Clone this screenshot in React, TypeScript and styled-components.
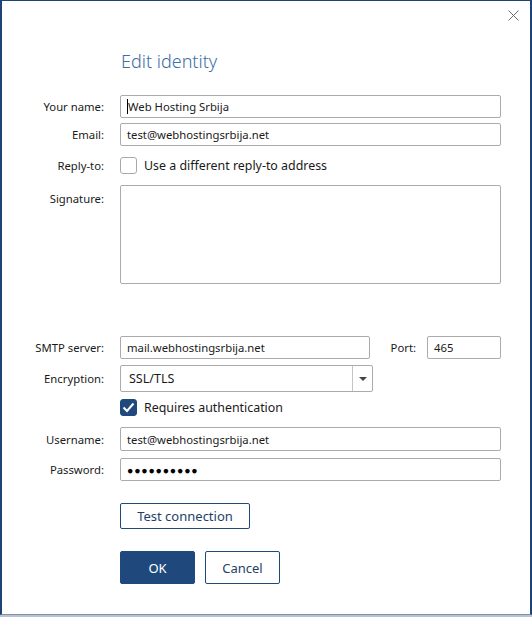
import React from "react";
import styled, { createGlobalStyle } from "styled-components";

const GlobalStyle = createGlobalStyle`
  html, body {
    margin: 0;
    padding: 0;
    background: #b9c3d1;
  }
  body {
    font-family: "Noto Sans", "Open Sans", sans-serif;
    color: #1a1a1a;
  }
`;

const Dialog = styled.div`
  width: 532px;
  height: 615px;
  box-sizing: border-box;
  background: #fff;
  border: 2px solid #1d4477;
  border-top-width: 1px;
  border-bottom: 1px solid #7f90aa;
  display: flex;
  flex-direction: column;
`;

const TopBar = styled.div`
  height: 29px;
  display: flex;
  justify-content: flex-end;
  align-items: center;
  padding-right: 11px;
`;

const CloseButton = styled.button`
  width: 12px;
  height: 12px;
  padding: 0;
  border: none;
  background: none;
  display: flex;
  align-items: center;
  justify-content: center;
  cursor: pointer;
  color: #6b6b6b;
`;

const Title = styled.h1`
  margin: 17px 0 0 119px;
  font-size: 18px;
  line-height: 28px;
  font-weight: 300;
  color: #3d6ea6;
`;

const Form = styled.div`
  display: flex;
  flex-direction: column;
  padding-right: 29px;
`;

const Row = styled.div<{ $mt: number; $top?: boolean }>`
  display: grid;
  grid-template-columns: 102px 1fr;
  column-gap: 16px;
  align-items: ${(p) => (p.$top ? "start" : "center")};
  margin-top: ${(p) => p.$mt}px;
`;

const Label = styled.label<{ $pt?: number }>`
  text-align: right;
  font-size: 11.3px;
  color: #1a1a1a;
  padding-top: ${(p) => p.$pt ?? 0}px;
`;

const Field = styled.div<{ $h?: number }>`
  height: ${(p) => p.$h ?? 23}px;
  box-sizing: border-box;
  border: 1px solid #ababab;
  border-radius: 2px;
  padding: 0 6px;
  display: flex;
  align-items: center;
  font-size: 11.3px;
  color: #1a1a1a;
  background: #fff;
  min-width: 0;
`;

const Caret = styled.span`
  display: inline-block;
  width: 1px;
  height: 15px;
  background: #000;
`;

const Dots = styled.span`
  font-size: 10.5px;
  letter-spacing: 0.8px;
  color: #000;
`;

const Inline = styled.div`
  display: flex;
  align-items: center;
`;

const PortLabel = styled.span`
  font-size: 11.3px;
  margin: 0 11px 0 21px;
`;

const Select = styled.div`
  width: 253px;
  height: 27px;
  box-sizing: border-box;
  border: 1px solid #ababab;
  border-radius: 2px;
  display: flex;
  align-items: stretch;
  font-size: 12.5px;
`;

const SelectValue = styled.div`
  flex: 1;
  display: flex;
  align-items: center;
  padding-left: 8px;
`;

const SelectArrow = styled.div`
  width: 19px;
  border-left: 1px solid #c4c4c4;
  display: flex;
  align-items: center;
  justify-content: center;
  &::after {
    content: "";
    border-left: 4px solid transparent;
    border-right: 4px solid transparent;
    border-top: 4px solid #444;
  }
`;

const CheckRow = styled.div`
  display: flex;
  align-items: center;
  gap: 7px;
  height: 18px;
  font-size: 12.4px;
  color: #1a1a1a;
`;

const Box = styled.span<{ $checked?: boolean }>`
  width: 17px;
  height: 17px;
  box-sizing: border-box;
  border-radius: 3px;
  border: 1px solid ${(p) => (p.$checked ? "#1f497d" : "#a9a9a9")};
  background: ${(p) => (p.$checked ? "#1f497d" : "#fff")};
  display: flex;
  align-items: center;
  justify-content: center;
  flex-shrink: 0;
`;

const Button = styled.button<{ $primary?: boolean; $w: number; $h: number }>`
  width: ${(p) => p.$w}px;
  height: ${(p) => p.$h}px;
  box-sizing: border-box;
  border: 1px solid #1f497d;
  border-radius: 2px;
  background: ${(p) => (p.$primary ? "#1f497d" : "#fff")};
  color: ${(p) => (p.$primary ? "#fff" : "#1f3f66")};
  font-family: inherit;
  font-size: 13px;
  padding: 0;
  cursor: pointer;
`;

const Buttons = styled.div`
  display: flex;
  gap: 10px;
`;

const Spacer = styled.span``;

export default function App() {
  return (
    <>
      <GlobalStyle />
      <Dialog>
        <TopBar>
          <CloseButton aria-label="Close">
            <svg width="11" height="11" viewBox="0 0 11 11">
              <path d="M0.5 0.5 L10.5 10.5 M10.5 0.5 L0.5 10.5" stroke="currentColor" strokeWidth="1" fill="none" />
            </svg>
          </CloseButton>
        </TopBar>
        <Title>Edit identity</Title>
        <Form>
          <Row $mt={20}>
            <Label>Your name:</Label>
            <Field>
              <Caret />
              Web Hosting Srbija
            </Field>
          </Row>
          <Row $mt={5}>
            <Label>Email:</Label>
            <Field>test@webhostingsrbija.net</Field>
          </Row>
          <Row $mt={10}>
            <Label>Reply-to:</Label>
            <CheckRow>
              <Box />
              Use a different reply-to address
            </CheckRow>
          </Row>
          <Row $mt={11} $top>
            <Label $pt={6}>Signature:</Label>
            <Field $h={99} />
          </Row>
          <Row $mt={52}>
            <Label>SMTP server:</Label>
            <Inline>
              <Field style={{ flex: 1 }}>mail.webhostingsrbija.net</Field>
              <PortLabel>Port:</PortLabel>
              <Field style={{ width: 74 }}>465</Field>
            </Inline>
          </Row>
          <Row $mt={6}>
            <Label>Encryption:</Label>
            <Select>
              <SelectValue>SSL/TLS</SelectValue>
              <SelectArrow />
            </Select>
          </Row>
          <Row $mt={6}>
            <Spacer />
            <CheckRow>
              <Box $checked>
                <svg width="13" height="11" viewBox="0 0 13 11">
                  <path d="M1.5 5.5 L5 9 L11.5 1.5" stroke="#fff" strokeWidth="2" fill="none" />
                </svg>
              </Box>
              Requires authentication
            </CheckRow>
          </Row>
          <Row $mt={11}>
            <Label>Username:</Label>
            <Field $h={24}>test@webhostingsrbija.net</Field>
          </Row>
          <Row $mt={7}>
            <Label>Password:</Label>
            <Field>
              <Dots>●●●●●●●●●●</Dots>
            </Field>
          </Row>
          <Row $mt={22}>
            <Spacer />
            <div>
              <Button $w={130} $h={26}>Test connection</Button>
            </div>
          </Row>
          <Row $mt={22}>
            <Spacer />
            <Buttons>
              <Button $primary $w={75} $h={33}>OK</Button>
              <Button $w={75} $h={33}>Cancel</Button>
            </Buttons>
          </Row>
        </Form>
      </Dialog>
    </>
  );
}
